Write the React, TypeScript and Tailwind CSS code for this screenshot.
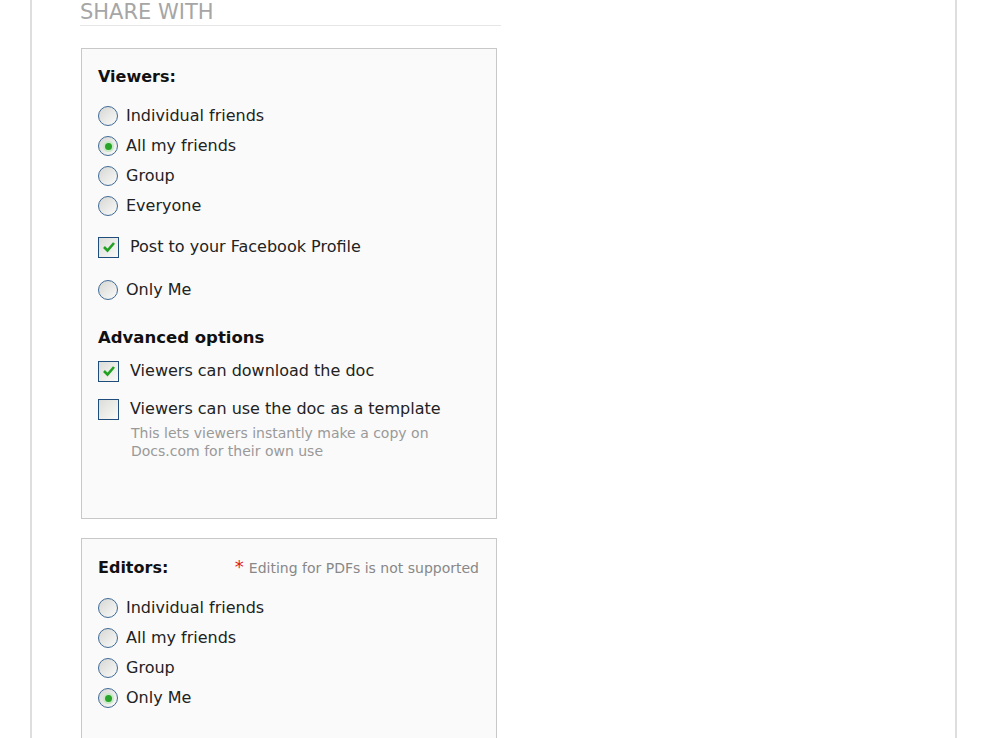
import React from 'react';

const font = { fontFamily: '"DejaVu Sans", Tahoma, sans-serif' };

const Radio: React.FC<{ label: string; checked?: boolean }> = ({ label, checked }) => (
  <label className="flex h-[30px] items-center">
    <span className="flex h-[20px] w-[20px] items-center justify-center rounded-full border-[1.5px] border-[#3f6a96] bg-gradient-to-br from-[#d6d6d3] to-[#fbfbfa]">
      {checked && <span className="h-[7px] w-[7px] rounded-full bg-[#28a428] shadow-[0_0_0_2px_#c8e8c8]" />}
    </span>
    <span className="ml-[8px] text-[16px] text-[#222]">{label}</span>
  </label>
);

const Checkbox: React.FC<{ label: string; checked?: boolean }> = ({ label, checked }) => (
  <label className="flex h-[30px] items-center">
    <span className="flex h-[21px] w-[21px] items-center justify-center border-[1.5px] border-[#1f4d7c] bg-gradient-to-br from-[#dcdcd8] to-[#fafaf8]">
      {checked && (
        <svg width="14" height="12" viewBox="0 0 14 12">
          <path d="M2 6 L5.5 9.5 L12 2" fill="none" stroke="#21a121" strokeWidth="2.6" />
        </svg>
      )}
    </span>
    <span className="ml-[11px] text-[16px] text-[#222]">{label}</span>
  </label>
);

const App: React.FC = () => {
  return (
    <div className="h-[738px] overflow-hidden bg-white" style={font}>
      <div className="ml-[30px] h-full w-[927px] border-x-2 border-[#dedede] pl-[48px]">
        <div className="w-[421px] border-b border-[#e6e6e6] pb-[1px]">
          <h2 className="text-[21px] leading-[24px] text-[#a6a6a6]">SHARE WITH</h2>
        </div>

        <div className="ml-[1px] mt-[22px] h-[471px] w-[416px] border border-[#c8c8c8] bg-[#fafafa] pl-[16px] pt-[18px]">
          <div className="text-[16px] font-bold leading-[20px] text-[#111]">Viewers:</div>
          <div className="mt-[14px]">
            <Radio label="Individual friends" />
            <Radio label="All my friends" checked />
            <Radio label="Group" />
            <Radio label="Everyone" />
          </div>
          <div className="mt-[11px]">
            <Checkbox label="Post to your Facebook Profile" checked />
          </div>
          <div className="mt-[13px]">
            <Radio label="Only Me" />
          </div>
          <div className="mt-[23px] text-[16.5px] font-bold leading-[20px] text-[#111]">Advanced options</div>
          <div className="mt-[8px]">
            <Checkbox label="Viewers can download the doc" checked />
          </div>
          <div className="mt-[8px]">
            <Checkbox label="Viewers can use the doc as a template" />
          </div>
          <p className="ml-[33px] w-[320px] text-[14px] leading-[18px] text-[#999]">
            This lets viewers instantly make a copy on Docs.com for their own use
          </p>
        </div>

        <div className="ml-[1px] mt-[19px] h-[260px] w-[416px] border border-[#c8c8c8] bg-[#fafafa] pl-[16px] pr-[17px] pt-[18px]">
          <div className="flex items-center justify-between leading-[20px]">
            <span className="text-[16px] font-bold text-[#111]">Editors:</span>
            <span className="text-[14px] text-[#888]">
              <span className="mr-[5px] text-[18px] text-[#e01b1b]">*</span>Editing for PDFs is not supported
            </span>
          </div>
          <div className="mt-[15px]">
            <Radio label="Individual friends" />
            <Radio label="All my friends" />
            <Radio label="Group" />
            <Radio label="Only Me" checked />
          </div>
        </div>
      </div>
    </div>
  );
};

export default App;
